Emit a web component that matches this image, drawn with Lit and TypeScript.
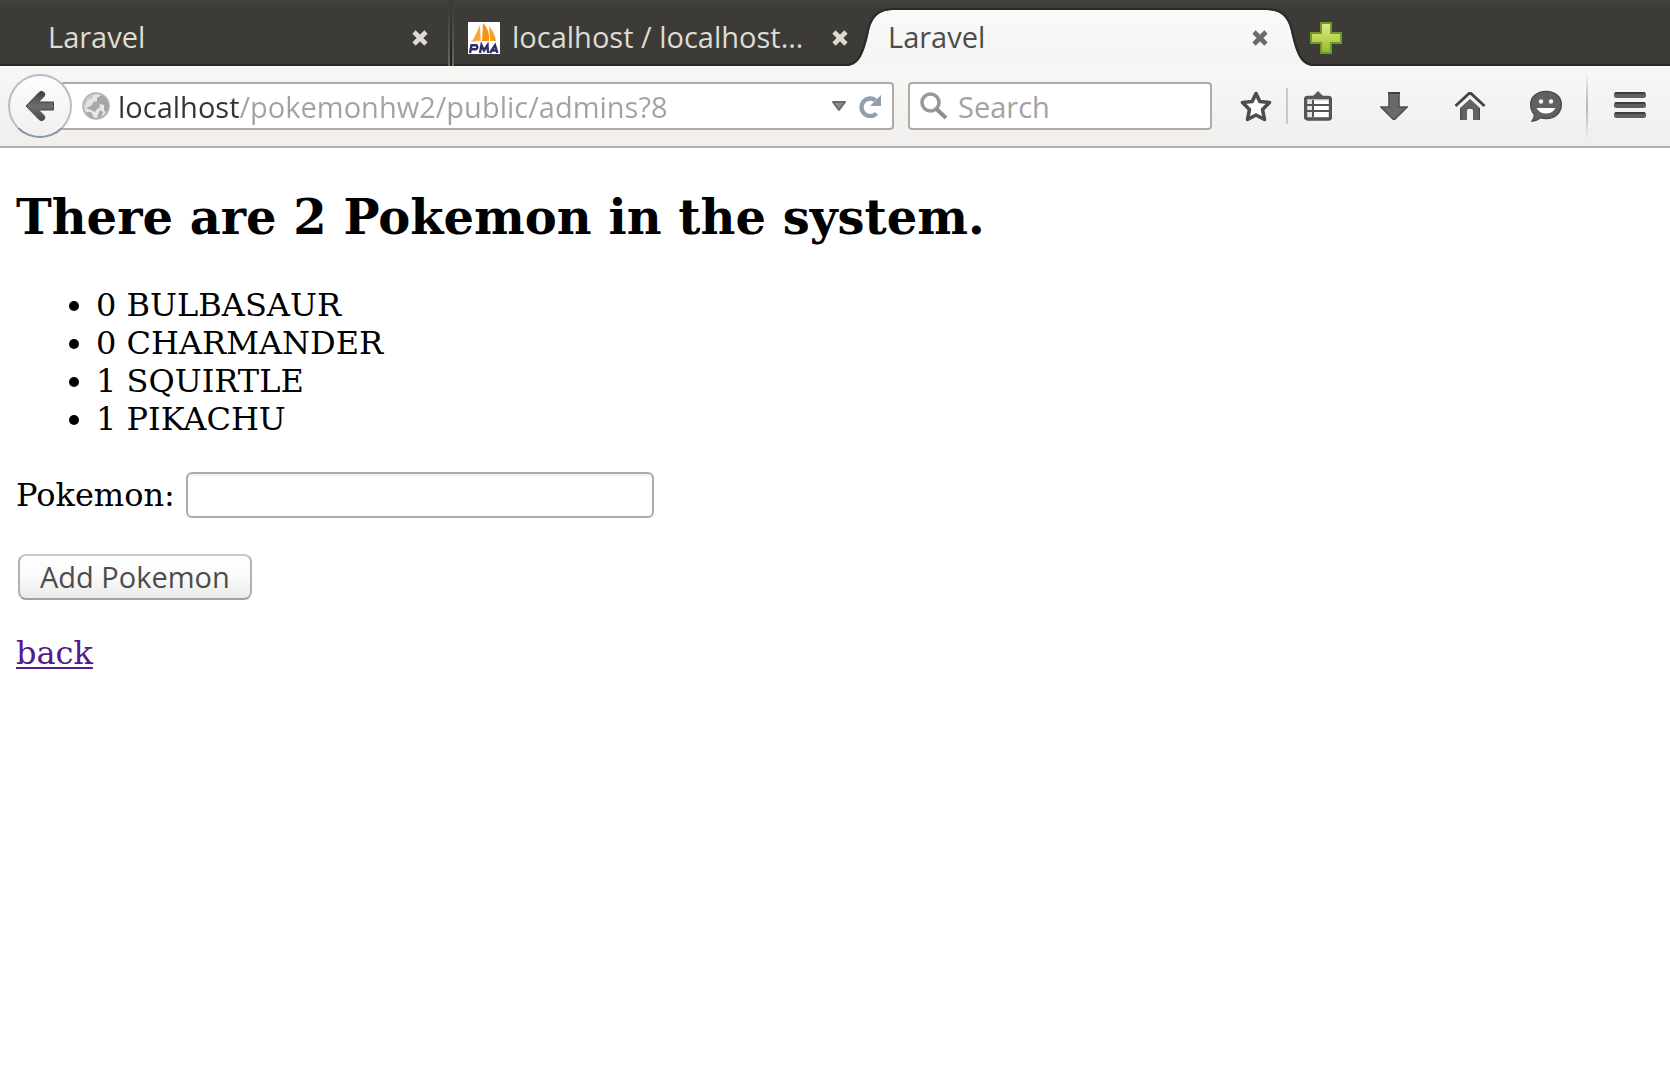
import { LitElement, html, css, svg } from "lit";
import { customElement, property, state } from "lit/decorators.js";
import { classMap } from "lit/directives/class-map.js";

const closeIcon = html`<svg class="close-icon" viewBox="0 0 16 16" width="16" height="16" aria-hidden="true">
  <path d="M2 2 L14 14 M14 2 L2 14" fill="none" stroke="currentColor" stroke-width="4.6" />
</svg>`;

const backIcon = html`<svg viewBox="0 0 32 32" width="32" height="32" aria-hidden="true">
  <defs>
    <linearGradient id="back-fill" x1="0" y1="0" x2="0" y2="1">
      <stop offset="0" stop-color="#3f3f3e" />
      <stop offset="0.5" stop-color="#6d6d6c" />
      <stop offset="1" stop-color="#4a4a49" />
    </linearGradient>
  </defs>
  <path d="M2 16 L15 2.5 Q17 .5 19.500 2 Q22 4 20 6.500 L14.500 12 H29.500 V20 H14.500 L20 25.500 Q22 28 19.500 30 Q17 31.500 15 29.500 Z" fill="url(#back-fill)" stroke="#454544" stroke-width="1" />
</svg>`;

const globeIcon = html`<svg viewBox="0 0 28 28" width="28" height="28" aria-hidden="true">
  <circle cx="14" cy="14" r="12.800" fill="#e6e6e6" stroke="#b3b3b3" stroke-width="2" />
  <path d="M2 11 Q4 4 10 2 L12 3 L10 6 L6 8 L4 12 L4 16 Z" fill="#c6c6c6" />
  <path d="M15 6 L20 3 L25 8 L27 15 L24 21 L22 18 L22 13 L18 12 L15 9 Z" fill="#a6a6a6" />
  <path d="M4 16 L10 13 L11 10 L17 9 L18 15 L14 18 L13 20 L9 18 Z M4 20 L9 20 L12 26 L8 25 Z M18 18 L21 20 L19 25 L15 26 Z" fill="#a9a9a9" />
</svg>`;

const dropIcon = html`<svg viewBox="0 0 14 10" width="14" height="10" aria-hidden="true">
  <path d="M1 1 H13 L7 9 Z" fill="#8e8e8c" stroke="#6b6b69" stroke-width="2" stroke-linejoin="round" />
</svg>`;

const reloadIcon = html`<svg viewBox="0 0 24 24" width="24" height="24" aria-hidden="true">
  <path d="M17.500 6.200 A8.800 8.800 0 1 0 18.500 19.500" fill="none" stroke="#919fac" stroke-width="4.400" />
  <path d="M23 1 V12 H12 Z" fill="#919fac" />
</svg>`;

const searchIcon = html`<svg viewBox="0 0 28 28" width="28" height="28" aria-hidden="true">
  <circle cx="10.500" cy="10.500" r="8.500" fill="none" stroke="#999998" stroke-width="3.600" />
  <path d="M16.500 17 L26 26" stroke="#8e8e8d" stroke-width="4" />
</svg>`;

const starIcon = html`<svg viewBox="0 0 32 32" width="32" height="32" aria-hidden="true">
  <path d="M16 3.500 L19.800 11.500 L29.500 12.500 L22.500 19.500 L24.500 29.500 L16 25 L7.500 29.500 L9.500 19.500 L2.500 12.500 L12.200 11.500 Z" fill="#fdfdfd" stroke="#4c4c4b" stroke-width="3.600" stroke-linejoin="round" />
</svg>`;

const clipboardIcon = html`<svg viewBox="0 0 28 30" width="28" height="30" aria-hidden="true">
  <path d="M8 6 L14 0 L20 6 Z" fill="#5a5a59" />
  <path d="M3 8 H25 V27 H3 Z" fill="#e2e2e1" />
  <path d="M10 10 H25 V26 H10 Z" fill="#fdfdfd" />
  <path d="M3 14 H25 M3 20 H25 M9 9 V26" fill="none" stroke="#555554" stroke-width="2" />
  <rect x="1.500" y="6.500" width="25" height="21.500" rx="2" fill="none" stroke="#555554" stroke-width="3.400" />
</svg>`;

const downloadIcon = html`<svg viewBox="0 0 28 28" width="28" height="28" aria-hidden="true">
  <path d="M9 1 H19 V15 H27 L14.500 27.500 H13.500 L1 15 H9 Z" fill="#6a6a69" stroke="#50504f" stroke-width="1.600" />
  <path d="M8 1 H20" stroke="#40403f" stroke-width="2" />
</svg>`;

const homeIcon = html`<svg viewBox="0 0 32 28" width="32" height="28" aria-hidden="true">
  <path d="M1.500 14 L15 1.500 H17 L30.500 14" fill="none" stroke="#444443" stroke-width="2.800" />
  <path d="M6 16 L16 7 L26 16 V28 H19 V19 Q19 17 17.500 17 H14.500 Q13 17 13 19 V28 H6 Z" fill="#636362" />
  <path d="M6.800 16 V28 M25.200 16 V28" stroke="#4d4d4c" stroke-width="1.600" />
</svg>`;

const chatIcon = html`<svg viewBox="0 0 32 32" width="32" height="32" aria-hidden="true">
  <path d="M16 1.500 C25 1.500 31.300 6.800 31.300 14.500 C31.300 23 25 28.500 16 28.500 Q13 28.500 10.500 27.500 Q7 31 2 31 Q4.500 28 4.500 24.500 Q.7 20.500 .7 14.500 C.7 6.800 7 1.500 16 1.500 Z" fill="#60605f" stroke="#4b4b4a" stroke-width="1.400" />
  <circle cx="11" cy="11.500" r="2.200" fill="#f4f4f3" /><circle cx="21" cy="11.500" r="2.200" fill="#f4f4f3" />
  <path d="M6.500 18 H25.500 Q22.500 23.500 16 23.500 Q9.500 23.500 6.500 18 Z" fill="#fff" />
</svg>`;

const menuIcon = html`<svg viewBox="0 0 32 26" width="32" height="26" aria-hidden="true">
  ${[0, 10, 20].map(
    (y) => svg`<rect x="0" y=${y} width="32" height="6" rx="2.500" fill="#5f5f5e" /><path d=${`M2 ${y + 1} H30`} stroke="#3d3d3c" stroke-width="2" stroke-linecap="round" />`
  )}
</svg>`;

const plusIcon = html`<svg viewBox="0 0 32 32" width="32" height="32" aria-hidden="true">
  <defs>
    <linearGradient id="plus-fill" x1="0" y1="0" x2="0" y2="1">
      <stop offset="0" stop-color="#dcea86" />
      <stop offset="0.5" stop-color="#bfd456" />
      <stop offset="1" stop-color="#93b52b" />
    </linearGradient>
  </defs>
  <path d="M11 1 H21 V11 H31 V21 H21 V31 H11 V21 H1 V11 H11 Z" fill="url(#plus-fill)" stroke="#6a9a2c" stroke-width="2" />
</svg>`;

const adminFavicon = html`<svg class="favicon" viewBox="0 0 32 32" width="32" height="32" aria-hidden="true">
  <rect width="32" height="32" fill="#fff" />
  <path d="M12 2 L13 19 L3 20 Q9 12 12 2 Z" fill="#fbc77c" />
  <path d="M9 10 L12 4 L12 18 L5 19 Z" fill="#f8a63a" />
  <path d="M15 1 Q22 8 21 19 L14 19 Z" fill="#f79210" />
  <path d="M21 4 Q27 11 28 19 L22 19 Z" fill="#f9a02b" />
  <g fill="none" stroke="#2f2c66" stroke-width="2.400">
    <path d="M2 31 L3.500 23.200 H8.500 Q10.500 25.500 8 27.200 H3.500" />
    <path d="M12 31 L13.500 23.200 L16 28.500 L19.500 23.200 L20 31" />
    <path d="M22 31 L27 23.200 L29.500 31 M24 28.500 H29" />
  </g>
</svg>`;

interface Tab {
  title: string;
  icon?: unknown;
}

@customElement("browser-tabs")
export class BrowserTabs extends LitElement {
  @property({ attribute: false }) tabs: Tab[] = [];
  @property({ type: Number }) selected = 0;

  static styles = css`
    :host {
      display: block;
      background: linear-gradient(#44433e, #3c3b37 8px);
      box-shadow: inset 0 -2px #2b2a27;
      font-family: "Open Sans", "Noto Sans", sans-serif;
      font-size: 29px;
      line-height: 40px;
    }
    .strip {
      display: flex;
      height: 66px;
      padding-left: 30px;
    }
    .tab {
      display: grid;
      flex: 0 1 420px;
      min-width: 0;
      color: #dfdbd2;
    }
    .divided {
      background:
        linear-gradient(#3c3b37 12%, #6a6861) 0 0 / 2px 100% no-repeat,
        linear-gradient(#3c3b37 12%, #1f1e1b) 2px 0 / 2px 100% no-repeat,
        linear-gradient(#3c3b37 12%, #6a6861) 4px 0 / 2px 100% no-repeat;
      margin-left: -2px;
      padding-left: 2px;
    }
    .face {
      grid-area: 1 / 1;
      display: flex;
      align-items: center;
      min-width: 0;
      padding: 10px 22px 0 18px;
    }
    .favicon {
      flex: none;
      margin-right: 12px;
    }
    .title {
      flex: 1;
      min-width: 0;
      padding: 0 0 2px;
      border: 0;
      background: none;
      color: inherit;
      font: inherit;
      text-align: left;
      white-space: nowrap;
      overflow: hidden;
      text-overflow: ellipsis;
    }
    .close,
    .add {
      display: grid;
      place-items: center;
      flex: none;
      padding: 0;
      border: 0;
      background: none;
      color: inherit;
    }
    .close {
      margin-left: 8px;
    }
    .active {
      color: #4c4c4c;
    }
    .active .close {
      color: #6a6a69;
    }
    .shape {
      grid-area: 1 / 1;
      display: flex;
      margin: 0 -24px;
    }
    .shoulder {
      flex: none;
    }
    .crown {
      flex: 1;
      margin-top: 8px;
      border-top: 2px solid #2b2a27;
      background: linear-gradient(#fafafa, #f4f4f3);
    }
    .add {
      margin: 10px 0 0 20px;
    }
  `;

  private shoulder(side: "left" | "right") {
    const flip = side === "right" ? "translate(48 0) scale(-1 1)" : "";
    const curve = "C14 66 18 52 22 36 C25 18 32 10 48 10";
    return html`<svg class="shoulder" viewBox="0 0 48 66" width="48" height="66" aria-hidden="true">
      <defs>
        <linearGradient id=${`shade-${side}`} x1="0" y1="0" x2="0" y2="1">
          <stop offset="0" stop-color="#fafafa" />
          <stop offset="1" stop-color="#f4f4f3" />
        </linearGradient>
      </defs>
      <g transform=${flip}>
        <path d=${`M0 66 ${curve} V66 Z`} fill=${`url(#shade-${side})`} />
        <path d="M0 65 C13 65 17 51 21 35 C24 17 31 9 48 9" fill="none" stroke="#2b2a27" stroke-width="2" />
      </g>
    </svg>`;
  }

  render() {
    return html`<div class="strip" role="tablist">
      ${this.tabs.map((tab, i) => {
        const active = i === this.selected;
        return html`<div class=${classMap({ tab: true, active, divided: !active && i > 0 })}>
          ${active ? html`<div class="shape">${this.shoulder("left")}<span class="crown"></span>${this.shoulder("right")}</div>` : ""}
          <div class="face">
            ${tab.icon ?? ""}
            <button class="title" role="tab" aria-selected=${active}>${tab.title}</button>
            <button class="close" aria-label="Close tab">${closeIcon}</button>
          </div>
        </div>`;
      })}
      <button class="add" aria-label="New tab">${plusIcon}</button>
    </div>`;
  }
}

@customElement("browser-toolbar")
export class BrowserToolbar extends LitElement {
  @property() address = "";

  static styles = css`
    :host {
      display: block;
      font-family: "Open Sans", "Noto Sans", sans-serif;
      font-size: 29px;
      line-height: 40px;
    }
    .bar {
      display: flex;
      align-items: center;
      height: 80px;
      padding-left: 8px;
      border-bottom: 2px solid #b2aea9;
      background: linear-gradient(#f7f7f6, #f0efee);
    }
    button {
      display: grid;
      place-items: center;
      flex: none;
      padding: 0;
      border: 0;
      background: none;
    }
    .back {
      position: relative;
      box-sizing: border-box;
      width: 64px;
      height: 64px;
      border: 2px solid #b4becb;
      border-bottom-color: #8494a8;
      border-radius: 50%;
      background: linear-gradient(#fdfdfd, #f1f0ef);
    }
    .field {
      box-sizing: border-box;
      display: flex;
      align-items: center;
      height: 48px;
      min-width: 0;
      border: 2px solid #b0aba5;
      border-radius: 4px;
      background: #fff;
    }
    .location {
      flex: 1;
      margin: 0 14px 0 -12px;
      padding: 0 10px 0 20px;
      gap: 8px;
    }
    .query {
      flex: 0 1 304px;
      padding: 0 8px 0 10px;
      gap: 10px;
      margin-right: 14px;
    }
    .field svg {
      flex: none;
    }
    .entry {
      flex: 1;
      min-width: 0;
      padding: 2px 0 0;
      border: 0;
      outline: 0;
      background: none;
      color: #4c4c4c;
      font: inherit;
      height: 40px;
    }
    .address {
      color: #a2a2a1;
      background: linear-gradient(90deg, #333 122px, #a2a2a1 122px);
      -webkit-background-clip: text;
      background-clip: text;
      -webkit-text-fill-color: transparent;
    }
    .entry::placeholder {
      color: #a2a2a1;
      opacity: 1;
    }
    .reload {
      margin-left: 4px;
    }
    .tool {
      width: 76px;
      height: 64px;
    }
    .compact {
      width: 60px;
    }
    .rule {
      width: 2px;
      height: 36px;
      background: #c3cad2;
    }
    .clip {
      margin-right: 8px;
    }
    .tall {
      height: 68px;
      margin-left: 2px;
      background: linear-gradient(transparent, #aab4c2, transparent);
    }
    .menu {
      width: 82px;
      padding: 0 0 2px 2px;
    }
  `;

  render() {
    return html`<div class="bar">
      <button class="back" aria-label="Back">${backIcon}</button>
      <div class="field location">
        ${globeIcon}
        <input class="entry address" aria-label="Address" .value=${this.address} spellcheck="false" />
        <button aria-label="Show history">${dropIcon}</button>
        <button class="reload" aria-label="Reload">${reloadIcon}</button>
      </div>
      <div class="field query">
        ${searchIcon}
        <input class="entry" aria-label="Search" placeholder="Search" />
      </div>
      <button class="tool compact" aria-label="Bookmark this page">${starIcon}</button>
      <span class="rule"></span>
      <button class="tool compact clip" aria-label="Bookmarks">${clipboardIcon}</button>
      <button class="tool" aria-label="Downloads">${downloadIcon}</button>
      <button class="tool" aria-label="Home">${homeIcon}</button>
      <button class="tool" aria-label="Chat">${chatIcon}</button>
      <span class="rule tall"></span>
      <button class="tool menu" aria-label="Menu">${menuIcon}</button>
    </div>`;
  }
}

@customElement("pokemon-admin")
export class PokemonAdmin extends LitElement {
  @state() private entries = [
    { count: 0, name: "BULBASAUR" },
    { count: 0, name: "CHARMANDER" },
    { count: 1, name: "SQUIRTLE" },
    { count: 1, name: "PIKACHU" },
  ];

  static styles = css`
    :host {
      display: block;
      padding: 41px 16px 32px;
      color: #000;
      font-family: "DejaVu Serif", serif;
      font-size: 32px;
      line-height: 38px;
    }
    .heading {
      margin: 0 0 41px;
      font-size: 48px;
      line-height: 56px;
    }
    .list {
      margin: 0 0 34px;
      padding-left: 80px;
    }
    .form {
      display: grid;
      justify-items: start;
      gap: 36px;
      margin-bottom: 34px;
    }
    .row {
      display: flex;
      align-items: center;
      gap: 11px;
      max-width: 100%;
    }
    .name {
      box-sizing: border-box;
      width: 468px;
      min-width: 0;
      height: 46px;
      padding: 0 8px;
      border: 2px solid #b0aba5;
      border-radius: 6px;
      background: #fff;
      box-shadow: inset 0 2px #f1f0ef;
      font: inherit;
      font-size: 29px;
    }
    .submit {
      box-sizing: border-box;
      height: 46px;
      margin-left: 2px;
      padding: 0 20px;
      border: 2px solid #b5b1ac;
      border-color: #cbc8c5 #b5b1ac #a3a09c;
      border-radius: 8px;
      background: linear-gradient(#fff, #fafafa 50%, #ebeae9);
      color: #4c4c4c;
      font-family: "Open Sans", "Noto Sans", sans-serif;
      font-size: 29px;
      line-height: 40px;
    }
    .link {
      color: #551a8b;
      text-decoration-thickness: 2px;
      text-underline-offset: 3px;
    }
  `;

  render() {
    return html`
      <h2 class="heading">There are 2 Pokemon in the system.</h2>
      <ul class="list">
        ${this.entries.map((e) => html`<li>${e.count} ${e.name}</li>`)}
      </ul>
      <form class="form" @submit=${(e: Event) => e.preventDefault()}>
        <div class="row">
          <label for="pokemon">Pokemon:</label>
          <input class="name" id="pokemon" name="pokemon" type="text" />
        </div>
        <button class="submit" type="submit">Add Pokemon</button>
      </form>
      <a class="link" href="#back">back</a>
    `;
  }
}

@customElement("app-root")
export class AppRoot extends LitElement {
  static styles = css`
    :host {
      display: block;
      min-height: 100vh;
      background: #fff;
    }
  `;

  private tabs: Tab[] = [
    { title: "Laravel" },
    { title: "localhost / localhost…", icon: adminFavicon },
    { title: "Laravel" },
  ];

  render() {
    return html`
      <browser-tabs .tabs=${this.tabs} .selected=${2}></browser-tabs>
      <browser-toolbar address="localhost/pokemonhw2/public/admins?8"></browser-toolbar>
      <pokemon-admin></pokemon-admin>
    `;
  }
}
